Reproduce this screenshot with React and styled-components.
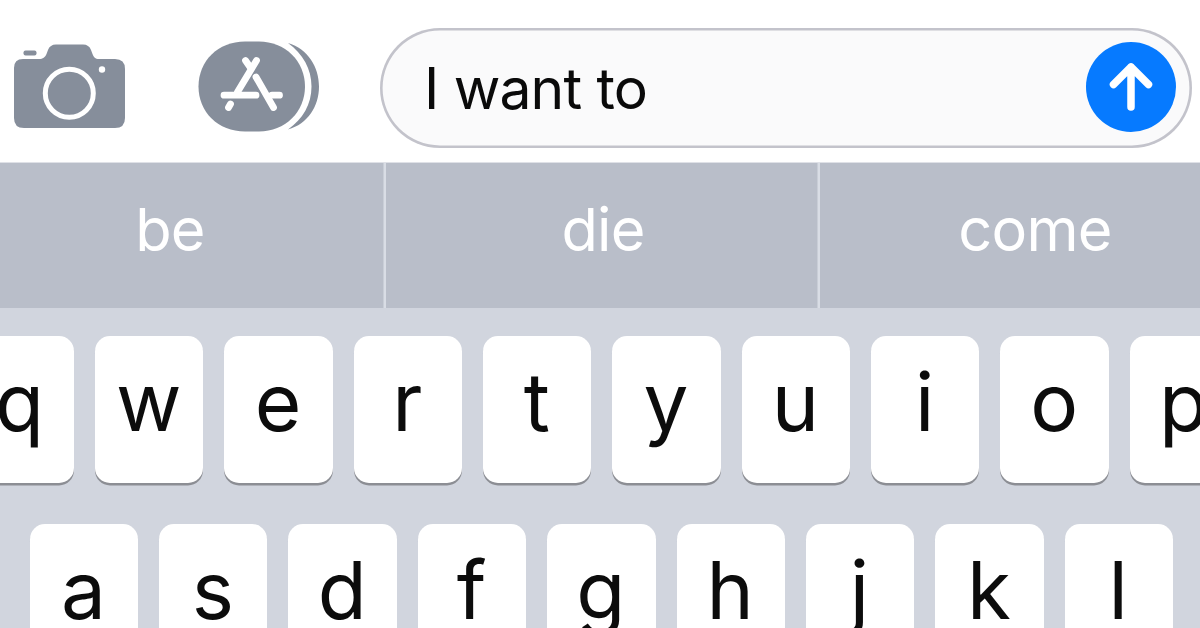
import styled, { createGlobalStyle } from "styled-components"

const GlobalStyle = createGlobalStyle`
  * {
    box-sizing: border-box;
  }
  body {
    margin: 0;
    overflow: hidden;
    background-color: #ffffff;
    font-family: Inter, Roboto, "Liberation Sans", sans-serif;
  }
`

const Screen = styled.div`
  display: flex;
  flex-direction: column;
  width: 1200px;
  height: 628px;
  overflow: hidden;
  background-color: #ffffff;
`

const MessageBar = styled.div`
  display: flex;
  align-items: flex-start;
  flex-shrink: 0;
  height: 163px;
  padding: 28px 8px 0 12px;
  border-bottom: 1px solid #dfe1e7;
`

const IconButton = styled.button`
  display: flex;
  flex-shrink: 0;
  margin: ${(props) => props.$margin};
  padding: 0;
  border: none;
  background: none;
  svg {
    display: block;
  }
`

const Field = styled.div`
  display: flex;
  align-items: center;
  justify-content: space-between;
  flex: 1;
  height: 120px;
  padding: 0 16px 0 44px;
  border-radius: 60px;
  background-color: #fafafb;
  box-shadow: inset 0 0 0 2.6px #c3c3cb;
`

const Message = styled.span`
  color: #0a0a0a;
  font-size: 57px;
  line-height: 70px;
  letter-spacing: -0.85px;
  padding-top: 1px;
  white-space: nowrap;
`

const SendButton = styled.button`
  display: flex;
  align-items: center;
  justify-content: center;
  width: 90px;
  height: 90px;
  margin-bottom: 3px;
  padding: 0;
  border: none;
  border-radius: 50%;
  background-color: #067aff;
`

// the phone is wider than the page, so these rows bleed off both sides
const Suggestions = styled.div`
  display: grid;
  grid-template-columns: 434px 434px 434px;
  flex-shrink: 0;
  width: 1302px;
  height: 145px;
  margin-left: -48px;
  background-color: #b9bec9;
`

const Suggestion = styled.div`
  display: flex;
  align-items: center;
  justify-content: center;
  padding-left: ${(props) => props.$left}px;
  padding-right: ${(props) => props.$right}px;
  padding-bottom: 13px;
  box-shadow: inset -2.5px 0 0 #d9dde5;
  color: #ffffff;
  font-size: 59.5px;
  line-height: 74px;
  letter-spacing: -0.8px;
`

const Keyboard = styled.div`
  display: flex;
  flex-direction: column;
  flex: 1;
  gap: 41px;
  padding-top: 28px;
  background-color: #d1d5de;
`

const KeyRow = styled.div`
  display: flex;
  flex-shrink: 0;
  gap: 21px;
  margin-left: ${(props) => props.$start}px;
`

const Key = styled.div`
  display: flex;
  justify-content: center;
  flex-shrink: 0;
  width: 108.35px;
  height: 146.5px;
  padding-top: 11px;
  padding-right: 1px;
  border-radius: 15px;
  background-color: #ffffff;
  box-shadow: 0 2.5px 0.5px #8c8e94;
  color: #0c0c0c;
  font-size: 80px;
  line-height: 110px;
`

const words = [
  { word: "be", left: 2, right: 0 },
  { word: "die", left: 0, right: 0 },
  { word: "come", left: 0, right: 4 },
]

const rows = [
  { start: -34.3, keys: "qwertyuiop" },
  { start: 29.8, keys: "asdfghjkl" },
]

function CameraIcon() {
  return (
    <svg width="114" height="86" viewBox="12 43 114 86">
      <rect x="23.5" y="50.5" width="13" height="5" rx="2" fill="#868e9b" />
      <path
        d="M23 59H39C43 59 45 57.500 46.500 54L48 50Q50 44.500 56 44.500H83Q89 44.500 91 50L92.500 54C94 57.500 95 59 99 59H115Q125 59 125 69V118Q125 128 115 128H24Q14 128 14 118V68Q14 59 23 59Z"
        fill="#868e9b"
      />
      <circle cx="69.300" cy="93.300" r="24" fill="none" stroke="#fff" strokeWidth="5" />
      <circle cx="102" cy="69.500" r="3.200" fill="#fff" />
    </svg>
  )
}

function AppStoreIcon() {
  return (
    <svg width="124" height="94" viewBox="197 39 124 94">
      <path d="M288 43C308 49 319 67 319 86.500S308 124 288 129.500C303 119 311.500 104 311.500 86.500S303 54 288 43Z" fill="#868e9b" />
      <path
        d="M245 41.500H259C285 41.500 305 61 305 86.500S285 131.500 259 131.500H245C218 131.500 198.500 112 198.500 86.500S218 41.500 245 41.500Z"
        fill="#868e9b"
      />
      <g fill="none" stroke="#fff" strokeWidth="6.800" strokeLinecap="round">
        <path d="M256.500 60.500L237.500 92M230.500 104L228.500 107.500" />
        <path d="M245.500 60.500L250 67M256 77L273.500 107.500" />
        <path d="M224 95.200H256M272 95.200H279.500" />
      </g>
    </svg>
  )
}

function ArrowIcon() {
  return (
    <svg width="90" height="90" viewBox="0 0 90 90">
      <path
        d="M45 25V65M27.500 42.500L45 25L62.500 42.500"
        fill="none"
        stroke="#fff"
        strokeWidth="7.500"
        strokeLinecap="round"
        strokeLinejoin="round"
      />
    </svg>
  )
}

function App() {
  return (
    <>
      <GlobalStyle />
      <Screen>
        <MessageBar>
          <IconButton $margin="15px 71px 0 0" aria-label="Camera">
            <CameraIcon />
          </IconButton>
          <IconButton $margin="11px 59px 0 0" aria-label="Apps">
            <AppStoreIcon />
          </IconButton>
          <Field>
            <Message>I want to</Message>
            <SendButton aria-label="Send">
              <ArrowIcon />
            </SendButton>
          </Field>
        </MessageBar>
        <Suggestions>
          {words.map(({ word, left, right }) => (
            <Suggestion key={word} $left={left} $right={right}>
              {word}
            </Suggestion>
          ))}
        </Suggestions>
        <Keyboard>
          {rows.map((row) => (
            <KeyRow key={row.keys} $start={row.start}>
              {row.keys.split("").map((letter) => (
                <Key key={letter}>{letter}</Key>
              ))}
            </KeyRow>
          ))}
        </Keyboard>
      </Screen>
    </>
  )
}

export default App
